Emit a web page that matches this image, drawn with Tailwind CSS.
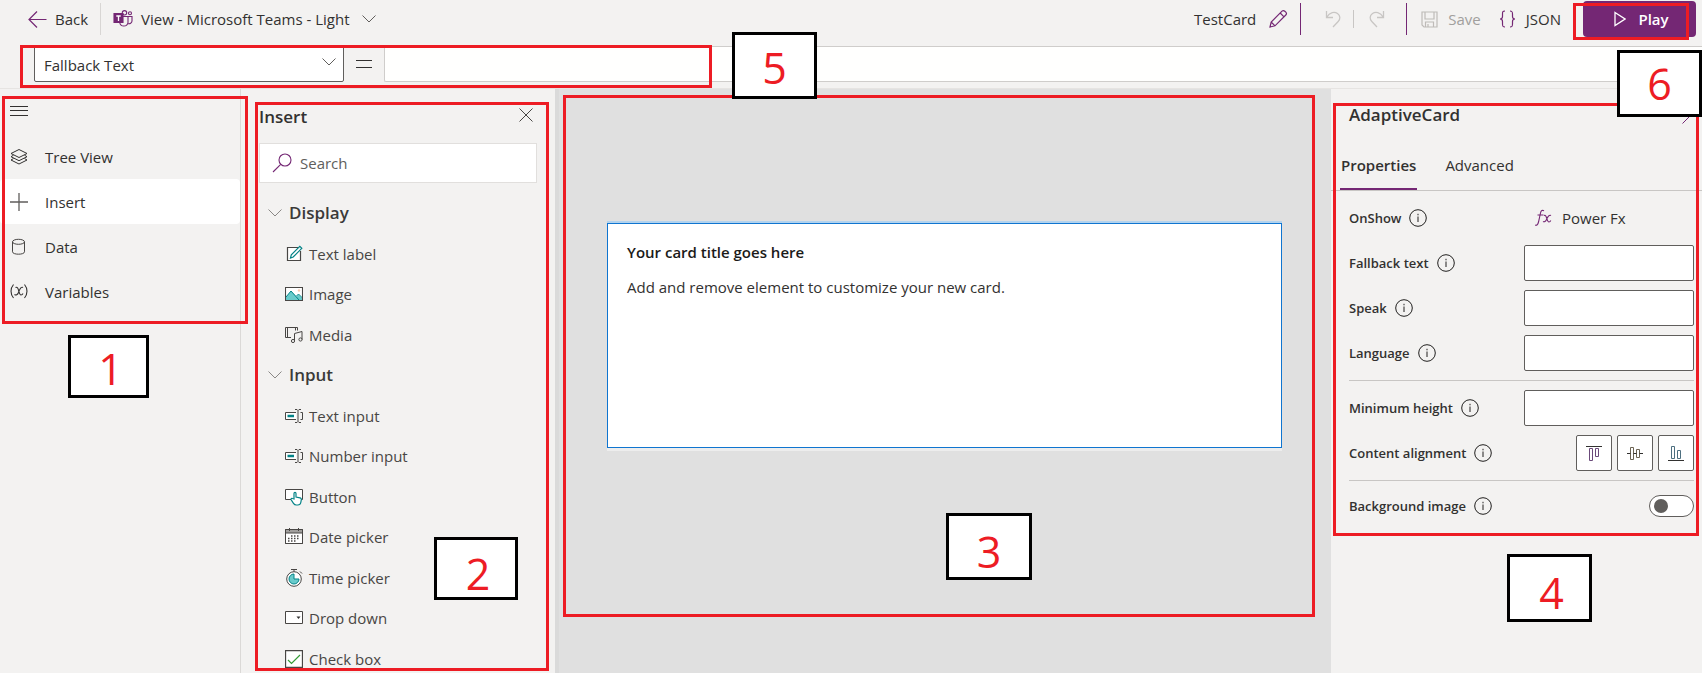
<!DOCTYPE html>
<html lang="en">
<head>
<meta charset="utf-8">
<title>Card designer</title>
<script src="https://cdn.jsdelivr.net/npm/@tailwindcss/browser@4"></script>
</head>
<body class="relative flex h-screen flex-col overflow-hidden bg-[#f3f2f1] font-['Open_Sans','Noto_Sans',sans-serif] text-[15px] leading-5 text-[#323130]">

<!-- Command bar -->
<header class="flex h-[38px] shrink-0 items-center pr-1.5">
  <button class="flex items-center gap-2 pl-7">
    <svg class="size-[19px]" viewBox="0 0 19 19" fill="none" stroke="#742774" stroke-width="1.2"><path d="M18.500 9.500H1M9 1.500L1 9.500l8 8"/></svg>
    <span>Back</span>
  </button>
  <span class="ml-3 h-8 w-px bg-[#d8d6d4]"></span>
  <button class="ml-3 flex items-center gap-2">
    <svg class="h-[18px] w-5" viewBox="0 0 20 18" fill="none" stroke="#742774" stroke-width="1.100"><path d="M1 3.500h9v9H1z" fill="#742774"/><path d="M3.300 6h4.400M5.500 6v5" stroke="#fff" stroke-width="1.300"/><circle cx="11.500" cy="2.800" r="2.200"/><circle cx="17" cy="3.300" r="1.500"/><path d="M10 6.500h5v6a4.200 4.200 0 0 1-8.300 0M15 6.500h4v4.500a3 3 0 0 1-4 2.600"/></svg>
    <span>View - Microsoft Teams - Light</span>
    <svg class="ml-1 h-2 w-3.5" viewBox="0 0 14 8" fill="none" stroke="#605e5c"><path d="M.5.5L7 7 13.500.5"/></svg>
  </button>

  <div class="ml-auto flex items-center">
    <button class="flex items-center gap-3">
      <span>TestCard</span>
      <svg class="size-5" viewBox="0 0 20 20" fill="none" stroke="#742774" stroke-width="1.200"><path d="M2 18l1.200-5L14 2.200a2 2 0 0 1 2.800 0l1 1a2 2 0 0 1 0 2.800L7 16.800zM3.200 13L7 16.800M12.200 4l3.800 3.800"/></svg>
    </button>
    <span class="ml-3 h-8 w-px bg-[#742774]"></span>
    <button class="ml-6 text-[#c8c6c4]" aria-label="Undo" disabled>
      <svg class="size-[18px]" viewBox="0 0 18 18" fill="none" stroke="currentColor" stroke-width="1.300"><path d="M1.500 1v6.500H8M1.500 7.500C5 2 9.500 1.500 12.500 3.500c3 2.200 3 5.500.7 8L8 17"/></svg>
    </button>
    <span class="ml-2.5 h-[18px] w-px bg-[#c8c6c4]"></span>
    <button class="ml-3.5 text-[#c8c6c4]" aria-label="Redo" disabled>
      <svg class="size-[18px]" viewBox="0 0 18 18" fill="none" stroke="currentColor" stroke-width="1.300"><path d="M15.500 1v6.500H9M15.500 7.500C12 2 7.500 1.500 4.500 3.500c-3 2.200-3 5.500-.7 8L9 17"/></svg>
    </button>
    <span class="ml-5 h-8 w-px bg-[#742774]"></span>
    <button class="ml-3.5 flex items-center gap-2.5 text-[#a19f9d]" disabled>
      <svg class="size-[17px]" viewBox="0 0 17 17" fill="none" stroke="#bebbb8" stroke-width="1.200"><path d="M1 1h15v15H3l-2-2zM4 1v7h9V1M4.500 16v-5h8v5M7 13v3"/></svg>
      <span>Save</span>
    </button>
    <button class="ml-[18px] flex items-center gap-2.5">
      <svg class="h-[18px] w-[17px]" viewBox="0 0 17 18" fill="none" stroke="#742774" stroke-width="1.200"><path d="M6 1C3.500 1 3.500 2 3.500 4v2.500C3.500 8 3 9 1 9c2 0 2.500 1 2.500 2.500V14c0 2 0 3 2.500 3M11 1c2.500 0 2.500 1 2.500 3v2.500C13.500 8 14 9 16 9c-2 0-2.500 1-2.500 2.500V14c0 2 0 3-2.500 3"/></svg>
      <span>JSON</span>
    </button>
    <button class="ml-[22px] flex h-9 w-[113px] items-center justify-center gap-3 rounded-sm bg-[#742774] pl-1 font-semibold text-white">
      <svg class="h-4 w-3" viewBox="0 0 12 16" fill="none" stroke="#fff" stroke-width="1.300"><path d="M1 1.500L11 8 1 14.500z"/></svg>
      <span>Play</span>
    </button>
  </div>
</header>

<!-- Formula bar -->
<div class="flex h-[51px] shrink-0 items-center border-b border-[#e6e4e2] pl-[34px] pt-1.5 pb-1">
  <div class="relative">
    <select aria-label="Property" class="h-9 w-[310px] appearance-none rounded-xs border border-[#605e5c] bg-white pt-0.5 pl-[9px]">
      <option>Fallback Text</option>
    </select>
    <svg class="pointer-events-none absolute top-3 right-2 h-2 w-3.5" viewBox="0 0 14 8" fill="none" stroke="#605e5c"><path d="M.5.5L7 7 13.500.5"/></svg>
  </div>
  <svg class="mx-3 h-2.5 w-4" viewBox="0 0 16 10" stroke="#323130"><path d="M0 1.500h16M0 8.500h16"/></svg>
  <input aria-label="Formula" class="h-9 min-w-0 flex-1 rounded-l-xs border border-r-0 border-[#cfcdcb] bg-[#fffffe] px-2">
</div>

<div class="flex min-h-0 flex-1">
  <!-- Navigation -->
  <nav class="flex w-[241px] shrink-0 flex-col border-r border-[#dbd9d7]">
    <button class="flex h-[45px] items-center pb-0.5 pl-2.5" aria-label="Toggle navigation">
      <svg class="h-3 w-[18px]" viewBox="0 0 18 12" stroke="#323130"><path d="M0 1.500h18M0 5.500h18M0 10.500h18"/></svg>
    </button>
    <button class="flex h-[45px] items-center gap-[17px] pl-2.5">
      <svg class="size-[18px]" viewBox="0 0 18 18" fill="none" stroke="#323130"><path d="M9 1.500l8 4-8 4-8-4zM3.500 7.200L1 8.700l8 4 8-4-2.500-1.500M3.500 10.500L1 12l8 4 8-4-2.500-1.500"/></svg>
      <span>Tree View</span>
    </button>
    <button class="flex h-[45px] items-center gap-[17px] rounded-sm bg-white pl-2.5">
      <svg class="size-[18px]" viewBox="0 0 18 18" stroke="#605e5c"><path d="M0 9h18M9 0v18" stroke-width="1.300"/></svg>
      <span>Insert</span>
    </button>
    <button class="flex h-[45px] items-center gap-[17px] pl-2.5">
      <svg class="size-[18px]" viewBox="0 0 18 18" fill="none" stroke="#484644"><ellipse cx="8.500" cy="3.800" rx="6" ry="2.500"/><path d="M2.500 3.800v10c0 3.200 12 3.200 12 0v-10"/></svg>
      <span>Data</span>
    </button>
    <button class="flex h-[45px] items-center gap-[17px] pl-2.5">
      <svg class="size-[18px]" viewBox="0 0 18 18" fill="none" stroke="#323130" stroke-width="1.100"><path d="M3.500 1.500c-3.300 4-3.300 9.500 0 13.500M14.500 1.500c3.300 4 3.300 9.500 0 13.500"/><path d="M5.500 4.500C9 2.500 8.500 12 11 12c1 0 1.500-.5 2-1.500M13 4.500C11 3 9 7.500 8.500 9.500 7.500 12 6 12.500 4.500 11.500"/></svg>
      <span>Variables</span>
    </button>
  </nav>

  <!-- Insert pane -->
  <aside class="flex w-[314px] shrink-0 flex-col pr-[18px] pl-[18px]">
    <div class="flex h-[54px] shrink-0 items-center justify-between pt-0.5 pr-1">
      <h2 class="text-[17px] font-semibold">Insert</h2>
      <button aria-label="Close insert pane" class="pb-1"><svg class="size-3.5" viewBox="0 0 14 14" stroke="#484644"><path d="M.5.5l13 13M13.500.5l-13 13"/></svg></button>
    </div>
    <label class="flex h-10 w-[278px] shrink-0 items-center gap-2 border border-[#e1dfdd] bg-white pl-3">
      <svg class="size-5" viewBox="0 0 20 20" fill="none" stroke="#742774" stroke-width="1.100"><circle cx="13" cy="7" r="6"/><path d="M8.700 11.300L1 19"/></svg>
      <input type="search" placeholder="Search" aria-label="Search" class="min-w-0 flex-1 outline-none placeholder:text-[#605e5c]">
    </label>
    <ul class="mt-2.5 grid h-[486px] shrink-0 auto-rows-fr text-[#484644]">
      <li class="flex items-center"><button class="flex items-center gap-[7px] pl-[9px] text-[17px] font-semibold text-[#3b3a39]"><svg class="h-2 w-3.5" viewBox="0 0 14 8" fill="none" stroke="#8a8886"><path d="M.5.5L7 7 13.500.5"/></svg>Display</button></li>
      <li class="flex items-center"><button class="flex items-center gap-1.5 pl-[26px]">
        <svg class="size-[18px]" viewBox="0 0 18 18" fill="none" stroke="#484644" stroke-width="1.200"><path d="M13 2.500H2.500v13h13V6" fill="#fff"/><path d="M5.500 13l.8-3.200 8.500-8.500 2 2-8.600 8.700z" stroke="#038387"/></svg>
        Text label</button></li>
      <li class="flex items-center"><button class="flex items-center gap-1.5 pl-[26px]">
        <svg class="size-[18px]" viewBox="0 0 18 18"><path d="M.5 2.500h17v13H.5z" fill="#fff"/><path d="M1 12l5-6 5.500 5.500 2-2 4 4v2H1z" fill="#69cbcb"/><path d="M1 12l5-6 8 9M11.500 11l2-2 4 4" fill="none" stroke="#038387"/><circle cx="14" cy="5.500" r="1.200" fill="#f7c9b0"/><path d="M.5 2.500h17v13H.5z" fill="none" stroke="#484644" stroke-width="1.100"/></svg>
        Image</button></li>
      <li class="flex items-center"><button class="flex items-center gap-1.5 pl-[26px]">
        <svg class="size-[18px]" viewBox="0 0 18 18" fill="none" stroke="#484644"><path d="M12.500 4.500v-3H.5v10h5.500M2.500 1.500v10M10.500 1.500v3"/><path d="M9.500 14.500v-7l7.500-2v8"/><circle cx="8" cy="15" r="1.600"/><circle cx="15.500" cy="13.500" r="1.600"/></svg>
        Media</button></li>
      <li class="flex items-center"><button class="flex items-center gap-[7px] pl-[9px] text-[17px] font-semibold text-[#3b3a39]"><svg class="h-2 w-3.5" viewBox="0 0 14 8" fill="none" stroke="#8a8886"><path d="M.5.5L7 7 13.500.5"/></svg>Input</button></li>
      <li class="flex items-center"><button class="flex items-center gap-1.5 pl-[26px]">
        <svg class="size-[18px]" viewBox="0 0 18 18" fill="none" stroke="#484644"><path d="M11 5.500H.5v7H11" fill="#fff"/><path d="M2.500 9h6.500" stroke="#038387" stroke-width="2.500"/><path d="M10 2.500h2l1 1 1-1h2M10 15.500h2l1-1 1 1h2M13 3.500v11M15.500 5.500h2v7h-2"/></svg>
        Text input</button></li>
      <li class="flex items-center"><button class="flex items-center gap-1.5 pl-[26px]">
        <svg class="size-[18px]" viewBox="0 0 18 18" fill="none" stroke="#484644"><path d="M11 5.500H.5v7H11" fill="#fff"/><path d="M2.500 9h6.500" stroke="#038387" stroke-width="2.500"/><path d="M10 2.500h2l1 1 1-1h2M10 15.500h2l1-1 1 1h2M13 3.500v11M15.500 5.500h2v7h-2"/></svg>
        Number input</button></li>
      <li class="flex items-center"><button class="flex items-center gap-1.5 pl-[26px]">
        <svg class="size-[18px]" viewBox="0 0 18 18" fill="#fff" stroke="#484644"><path d="M6 11.500H.5v-10h17v10h-2"/><path d="M9 11V5.500c0-1.500 2-1.500 2 0V9l4 .8c1 .2 1.500 1 1.300 2l-.5 2.700c-.3 1.800-1.600 2.500-3 2.500h-1.500c-1.300 0-2-.5-2.800-1.700l-2.500-3.800c-.3-1 .8-1.500 1.500-1z" stroke="#038387" stroke-width="1.200"/></svg>
        Button</button></li>
      <li class="flex items-center"><button class="flex items-center gap-1.5 pl-[26px]">
        <svg class="size-[18px]" viewBox="0 0 18 18" fill="none" stroke="#484644"><path d="M.5 1.500h17v14H.5z" fill="#fff"/><path d="M1 2h16v3H1z" fill="#a19f9d" stroke="none"/><path d="M.5 1.500h17v14H.5zM.5 5h17M4.500 0v3M13.500 0v3"/><path d="M6 8h9M3 10.500h12M3 13h9" stroke-dasharray="1.500 1.500" stroke-width="1.300"/></svg>
        Date picker</button></li>
      <li class="flex items-center"><button class="flex items-center gap-1.5 pl-[26px]">
        <svg class="size-[18px]" viewBox="0 0 18 18" fill="none" stroke="#484644"><circle cx="9" cy="10" r="7.300" fill="#fff"/><path d="M9 10V5a5 5 0 1 0 5 5z" fill="#69cbcb" stroke="#038387"/><path d="M6 .5h6M9 .5v2M15 2.500l2 2"/></svg>
        Time picker</button></li>
      <li class="flex items-center"><button class="flex items-center gap-1.5 pl-[26px]">
        <svg class="size-[18px]" viewBox="0 0 18 18" fill="#fff" stroke="#484644"><path d="M.5 2.500h17v12H.5z"/><path d="M11.500 7.500h4l-2 2.500z" fill="#323130" stroke="none"/></svg>
        Drop down</button></li>
      <li class="flex items-center"><button class="flex items-center gap-1.5 pl-[26px]">
        <svg class="size-[18px]" viewBox="0 0 18 18" fill="#fff" stroke="#484644"><path d="M.5.5h17v17H.5z" stroke-width="1.300"/><path d="M3 10l3.500 3.500L15 5" fill="none" stroke="#359b35" stroke-width="1.200"/></svg>
        Check box</button></li>
    </ul>
  </aside>

  <!-- Canvas -->
  <main class="min-w-0 flex-1 border-l-4 border-[#dadada] bg-[#e0e0e0] pt-[134px] pr-[49px] pl-12">
    <article class="h-[225px] border border-[#0f75d0] bg-white px-[19px] pt-[18px] shadow-[0_3px_0_#ededed,0_-2px_0_#b3d3ee]">
      <h1 class="font-semibold text-[#1b1a19]">Your card title goes here</h1>
      <p class="mt-[15px]">Add and remove element to customize your new card.</p>
    </article>
  </main>

  <!-- Properties pane -->
  <aside class="w-[371px] shrink-0">
    <div class="flex h-[55px] items-center justify-between pr-2.5 pb-1 pl-[18px]">
      <h2 class="text-[17px] font-semibold">AdaptiveCard</h2>
      <button aria-label="Collapse properties"><svg class="h-[18px] w-2.5" viewBox="0 0 10 18" fill="none" stroke="#742774"><path d="M.5.5L9 9 .5 17.500"/></svg></button>
    </div>
    <div role="tablist" class="flex h-[47px] items-stretch gap-[22px] border-b border-[#c8c6c4] pl-[9px]">
      <button role="tab" aria-selected="true" class="border-b-2 border-[#742774] px-px pb-0.5 font-semibold">Properties</button>
      <button role="tab" aria-selected="false" class="border-b-2 border-transparent px-1.5 pb-0.5">Advanced</button>
    </div>
    <div class="pt-1 pr-2 pl-[18px] text-[13px] font-semibold">
      <div class="flex h-[45px] items-center gap-2">
        <span>OnShow</span>
        <svg class="size-[18px]" viewBox="0 0 18 18" fill="none" stroke="#201f1e"><circle cx="9" cy="9" r="8.300"/><path d="M9 7.500v5.500M9 4.800v1.500"/></svg>
        <button class="ml-auto flex w-[159px] items-center gap-2.5 text-[15px] font-normal">
          <svg class="h-[18px] w-[17px]" viewBox="0 0 17 18" fill="none" stroke="#742774" stroke-width="1.100"><path d="M0 16c2 1 3-1 3.500-3l2-9C6 1.500 7.500.8 9 1.800M2.500 6h6"/><path d="M9 6.500c3-1.500 2.500 6.500 5 6.500 1 0 1.300-.5 1.800-1.500M16 6.500c-2-1.200-3.500 2-4.500 4-1 2-2 2.800-3.500 2"/></svg>
          Power Fx
        </button>
      </div>
      <div class="flex h-[45px] items-center gap-2">
        <label for="fallback">Fallback text</label>
        <svg class="size-[18px]" viewBox="0 0 18 18" fill="none" stroke="#201f1e"><circle cx="9" cy="9" r="8.300"/><path d="M9 7.500v5.500M9 4.800v1.500"/></svg>
        <input id="fallback" class="ml-auto h-9 w-[170px] rounded-xs border border-[#605e5c] bg-white px-2">
      </div>
      <div class="flex h-[45px] items-center gap-2">
        <label for="speak">Speak</label>
        <svg class="size-[18px]" viewBox="0 0 18 18" fill="none" stroke="#201f1e"><circle cx="9" cy="9" r="8.300"/><path d="M9 7.500v5.500M9 4.800v1.500"/></svg>
        <input id="speak" class="ml-auto h-9 w-[170px] rounded-xs border border-[#605e5c] bg-white px-2">
      </div>
      <div class="flex h-[45px] items-center gap-2">
        <label for="language">Language</label>
        <svg class="size-[18px]" viewBox="0 0 18 18" fill="none" stroke="#201f1e"><circle cx="9" cy="9" r="8.300"/><path d="M9 7.500v5.500M9 4.800v1.500"/></svg>
        <input id="language" class="ml-auto h-9 w-[170px] rounded-xs border border-[#605e5c] bg-white px-2">
      </div>
      <hr class="mt-[5px] mb-1 border-[#c8c6c4]">
      <div class="flex h-[45px] items-center gap-2">
        <label for="minheight">Minimum height</label>
        <svg class="size-[18px]" viewBox="0 0 18 18" fill="none" stroke="#201f1e"><circle cx="9" cy="9" r="8.300"/><path d="M9 7.500v5.500M9 4.800v1.500"/></svg>
        <input id="minheight" class="ml-auto h-9 w-[170px] rounded-xs border border-[#605e5c] bg-white px-2">
      </div>
      <div class="flex h-[45px] items-center gap-2">
        <span>Content alignment</span>
        <svg class="size-[18px]" viewBox="0 0 18 18" fill="none" stroke="#201f1e"><circle cx="9" cy="9" r="8.300"/><path d="M9 7.500v5.500M9 4.800v1.500"/></svg>
        <div class="ml-auto flex gap-[5px]">
          <button aria-label="Align top" class="flex size-9 items-center justify-center rounded-xs border border-[#605e5c] bg-white"><svg class="size-4" viewBox="0 0 16 16" fill="none" stroke="#323130"><path d="M0 1.500h16"/><path d="M3.500 3.500h3v12h-3zM9.500 3.500h3v8h-3z" stroke="#6b4a7a"/></svg></button>
          <button aria-label="Align middle" class="flex size-9 items-center justify-center rounded-xs border border-[#605e5c] bg-white"><svg class="size-4" viewBox="0 0 16 16" fill="none" stroke="#6d6453"><path d="M3.500 2.500h3v12h-3zM9.500 4.500h3v8h-3z"/><path d="M0 8.500h3.500M6.500 8.500h3M12.500 8.500H16" stroke="#323130"/></svg></button>
          <button aria-label="Align bottom" class="flex size-9 items-center justify-center rounded-xs border border-[#605e5c] bg-white"><svg class="size-4" viewBox="0 0 16 16" fill="none" stroke="#4d6f80"><path d="M3.500 1.500h3v12h-3zM9.500 5.500h3v8h-3z"/><path d="M0 15.500h16" stroke="#323130"/></svg></button>
        </div>
      </div>
      <hr class="mt-[5px] mb-0.5 border-[#c8c6c4]">
      <div class="flex h-[45px] items-center gap-2">
        <label for="bgimage">Background image</label>
        <svg class="size-[18px]" viewBox="0 0 18 18" fill="none" stroke="#201f1e"><circle cx="9" cy="9" r="8.300"/><path d="M9 7.500v5.500M9 4.800v1.500"/></svg>
        <input id="bgimage" type="checkbox" role="switch" class="ml-auto h-[22px] w-[45px] appearance-none rounded-full border border-[#605e5c] bg-white before:mt-[3px] before:ml-1 before:block before:size-3.5 before:rounded-full before:bg-[#605e5c] checked:before:ml-[25px]">
      </div>
    </div>
  </aside>
</div>

<!-- Numbered callouts laid over the designer -->
<div class="pointer-events-none absolute inset-0 text-[43px] leading-none text-[#ed1c24]">
  <div class="absolute top-24 left-0.5 h-[228px] w-[246px] border-3 border-[#ed1c24]"></div>
  <div class="absolute top-[102px] left-[255px] h-[569px] w-[294px] border-3 border-[#ed1c24]"></div>
  <div class="absolute top-[95px] right-[387px] left-[563px] h-[522px] border-3 border-[#ed1c24]"></div>
  <div class="absolute top-[103px] right-[3px] h-[433px] w-[366px] border-3 border-[#ed1c24]"></div>
  <div class="absolute top-[45px] left-5 h-[43px] w-[692px] border-3 border-[#ed1c24]"></div>
  <div class="absolute top-[3px] right-[13px] h-[37px] w-[116px] border-3 border-[#ed1c24]"></div>

  <div class="absolute top-[335px] left-[68px] flex h-[63px] w-[81px] items-center justify-center border-3 border-black bg-white pt-1 pl-1">1</div>
  <div class="absolute top-[537px] left-[434px] flex h-[63px] w-[84px] items-center justify-center border-3 border-black bg-white pt-2.5 pl-1">2</div>
  <div class="absolute top-[513px] left-[946px] flex h-[67px] w-[86px] items-center justify-center border-3 border-black bg-white pt-2.5">3</div>
  <div class="absolute top-[554px] right-[110px] flex h-[68px] w-[85px] items-center justify-center border-3 border-black bg-white pt-2 pl-1">4</div>
  <div class="absolute top-8 left-[732px] flex h-[67px] w-[85px] items-center justify-center border-3 border-black bg-white pt-1">5</div>
  <div class="absolute top-[50px] right-0 flex h-[67px] w-[85px] items-center justify-center border-3 border-black bg-white">6</div>
</div>
</body>
</html>
